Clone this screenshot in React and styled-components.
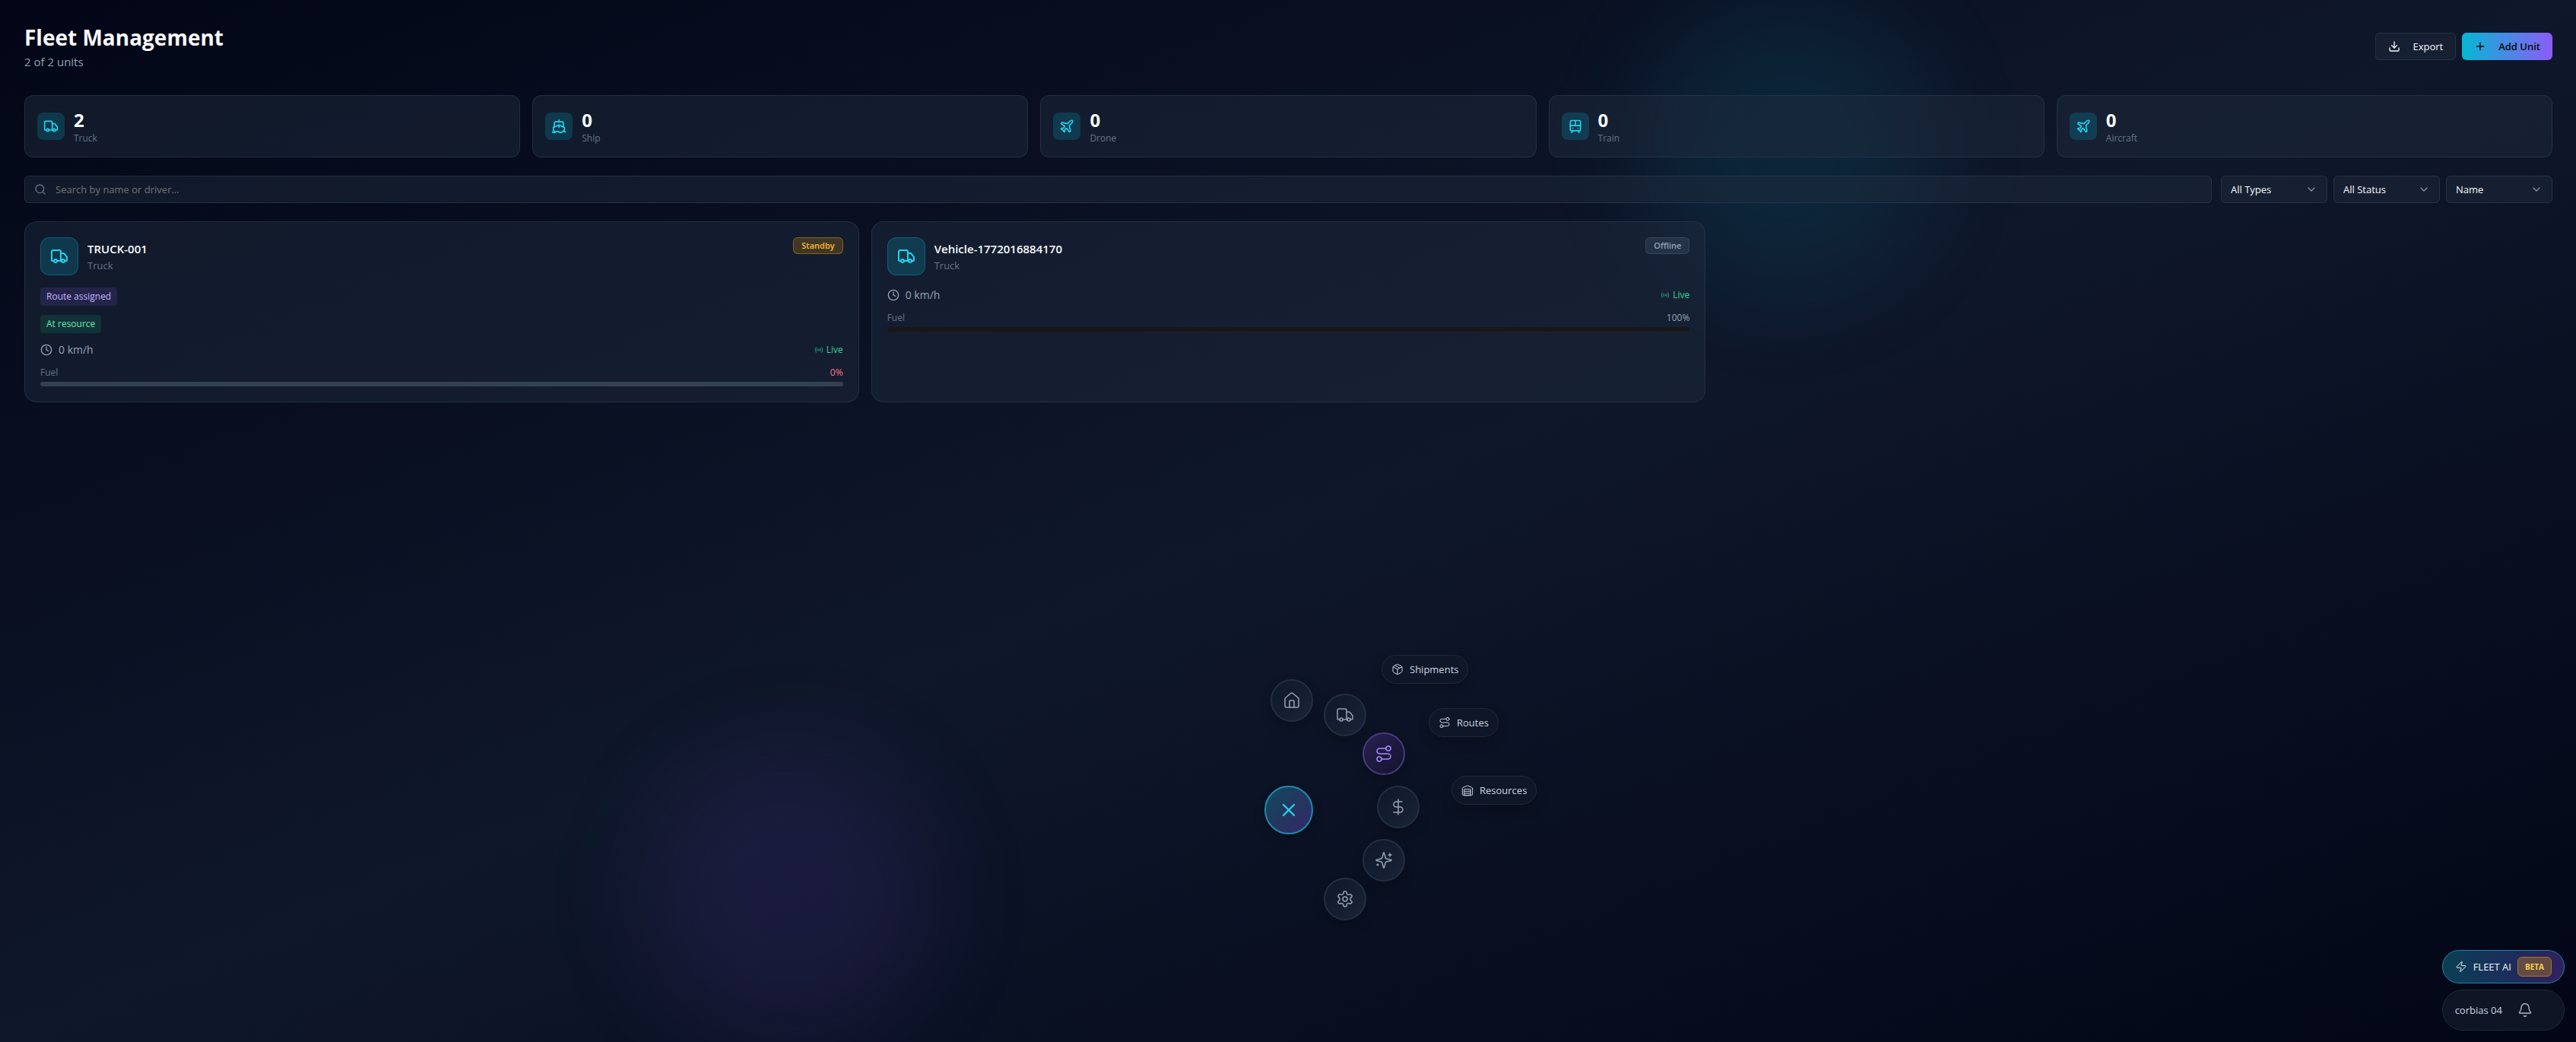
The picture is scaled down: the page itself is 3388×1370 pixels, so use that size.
import React, { useState } from 'react';
import styled, { createGlobalStyle, css } from 'styled-components';
import {
  Truck,
  Ship,
  Plane,
  TramFront,
  Download,
  Plus,
  Search,
  ChevronDown,
  Clock,
  Radio,
  House,
  Route,
  DollarSign,
  X,
  Package,
  Zap,
  Bell,
} from 'lucide-react';

const stats = [
  { label: 'Truck', count: 2, icon: Truck },
  { label: 'Ship', count: 0, icon: Ship },
  { label: 'Drone', count: 0, icon: Plane },
  { label: 'Train', count: 0, icon: TramFront },
  { label: 'Aircraft', count: 0, icon: Plane },
];

const vehicles = [
  {
    name: 'TRUCK-001',
    type: 'Truck',
    status: 'Standby',
    tags: [
      { text: 'Route assigned', tone: 'violet' },
      { text: 'At resource', tone: 'green' },
    ],
    speed: 0,
    fuel: 0,
  },
  {
    name: 'Vehicle-1772016884170',
    type: 'Truck',
    status: 'Offline',
    tags: [],
    speed: 0,
    fuel: 100,
  },
];

// offsets are measured from the top left corner of the radial menu
const menuItems = [
  { label: 'Home', icon: House, x: 8, y: 0 },
  { label: 'Fleet', icon: Truck, x: 78, y: 19 },
  { label: 'Logistics', icon: Route, x: 129, y: 70, active: true },
  { label: 'Finance', icon: DollarSign, x: 148, y: 140 },
  { label: 'Assistant', icon: SparklesIcon, x: 129, y: 210 },
  { label: 'Settings', icon: GearIcon, x: 78, y: 261 },
];

const subItems = [
  { label: 'Shipments', icon: Package, x: 154, y: -32 },
  { label: 'Routes', icon: Route, x: 216, y: 38 },
  { label: 'Resources', icon: WarehouseIcon, x: 246, y: 127 },
];

function App() {
  const [query, setQuery] = useState('');
  const shown = vehicles.filter((v) =>
    v.name.toLowerCase().includes(query.toLowerCase())
  );

  return (
    <>
      <GlobalStyle />
      <PageStyled>
        <Glow $tone='cyan' />
        <Glow $tone='violet' />

        <Content>
          <Header>
            <div>
              <Title>Fleet Management</Title>
              <Subtitle>
                {shown.length} of {vehicles.length} units
              </Subtitle>
            </div>
            <Actions>
              <ActionButton type='button'>
                <Download size={16} />
                Export
              </ActionButton>
              <ActionButton type='button' $primary>
                <Plus size={16} />
                Add Unit
              </ActionButton>
            </Actions>
          </Header>

          <Stats>
            {stats.map(({ label, count, icon: Icon }) => (
              <StatCard key={label}>
                <IconBox>
                  <Icon size={20} />
                </IconBox>
                <div>
                  <StatCount>{count}</StatCount>
                  <StatLabel>{label}</StatLabel>
                </div>
              </StatCard>
            ))}
          </Stats>

          <Filters>
            <SearchBox>
              <Search size={16} />
              <input
                type='text'
                aria-label='Search units'
                placeholder='Search by name or driver...'
                value={query}
                onChange={(e) => setQuery(e.target.value)}
              />
            </SearchBox>
            <Selects>
              <Filter label='Type' options={['All Types', 'Truck', 'Ship']} />
              <Filter label='Status' options={['All Status', 'Standby', 'Offline']} />
              <Filter label='Sort by' options={['Name', 'Fuel', 'Speed']} />
            </Selects>
          </Filters>

          <Cards>
            {shown.map((vehicle) => (
              <VehicleCard key={vehicle.name} vehicle={vehicle} />
            ))}
          </Cards>
        </Content>

        <RadialMenu />

        <Dock>
          <AiButton type='button'>
            <Zap size={16} strokeWidth={1.5} />
            FLEET AI
            <Beta>BETA</Beta>
          </AiButton>
          <UserPill>
            <span>corbias 04</span>
            <BellButton type='button' aria-label='Notifications'>
              <Bell size={20} strokeWidth={2} />
            </BellButton>
          </UserPill>
        </Dock>
      </PageStyled>
    </>
  );
}

function Filter({ label, options }) {
  return (
    <SelectBox>
      <select aria-label={label}>
        {options.map((option) => (
          <option key={option}>{option}</option>
        ))}
      </select>
      <ChevronDown size={16} />
    </SelectBox>
  );
}

function VehicleCard({ vehicle }) {
  const { name, type, status, tags, speed, fuel } = vehicle;

  return (
    <CardStyled>
      <CardHead>
        <IconBox $large>
          <Truck size={24} />
        </IconBox>
        <CardTitle>
          <h3>{name}</h3>
          <p>{type}</p>
        </CardTitle>
        <Status $status={status}>{status}</Status>
      </CardHead>
      {tags.map((tag) => (
        <Tag key={tag.text} $tone={tag.tone}>
          {tag.text}
        </Tag>
      ))}
      <Row>
        <Speed>
          <Clock size={16} />
          {speed} km/h
        </Speed>
        <Live>
          <Radio size={12} />
          Live
        </Live>
      </Row>
      <div>
        <FuelRow $low={fuel < 20}>
          <span>Fuel</span>
          <b>{fuel}%</b>
        </FuelRow>
        <Bar>
          <BarFill style={{ width: `${fuel}%` }} />
        </Bar>
      </div>
    </CardStyled>
  );
}

function RadialMenu() {
  return (
    <MenuStyled>
      {menuItems.map(({ label, icon: Icon, x, y, active }) => (
        <MenuButton
          key={label}
          type='button'
          aria-label={label}
          $x={x}
          $y={y}
          $active={active}
        >
          <Icon size={24} strokeWidth={1.5} />
        </MenuButton>
      ))}
      {subItems.map(({ label, icon: Icon, x, y }) => (
        <SubButton key={label} type='button' $x={x} $y={y}>
          <Icon size={16} strokeWidth={1.5} />
          {label}
        </SubButton>
      ))}
      <CloseButton type='button' aria-label='Close menu'>
        <X size={28} strokeWidth={2} />
      </CloseButton>
    </MenuStyled>
  );
}

function LineIcon({ size, strokeWidth, children }) {
  return (
    <svg
      width={size}
      height={size}
      viewBox='0 0 24 24'
      fill='none'
      stroke='currentColor'
      strokeWidth={strokeWidth}
      strokeLinecap='round'
      strokeLinejoin='round'
    >
      {children}
    </svg>
  );
}

function SparklesIcon(props) {
  return (
    <LineIcon {...props}>
      <path d='M9.937 15.5A2 2 0 0 0 8.5 14.063l-6.135-1.582a.5.5 0 0 1 0-.962L8.5 9.936A2 2 0 0 0 9.937 8.5l1.582-6.135a.5.5 0 0 1 .963 0L14.063 8.5A2 2 0 0 0 15.5 9.937l6.135 1.581a.5.5 0 0 1 0 .964L15.5 14.063a2 2 0 0 0-1.437 1.437l-1.582 6.135a.5.5 0 0 1-.963 0z' />
      <path d='M20 3v4' />
      <path d='M22 5h-4' />
      <path d='M4 17v2' />
      <path d='M5 18H3' />
    </LineIcon>
  );
}

function GearIcon(props) {
  return (
    <LineIcon {...props}>
      <path d='M12.22 2h-.44a2 2 0 0 0-2 2v.18a2 2 0 0 1-1 1.73l-.43.25a2 2 0 0 1-2 0l-.15-.08a2 2 0 0 0-2.73.73l-.22.38a2 2 0 0 0 .73 2.73l.15.1a2 2 0 0 1 1 1.72v.51a2 2 0 0 1-1 1.74l-.15.09a2 2 0 0 0-.73 2.73l.22.38a2 2 0 0 0 2.73.73l.15-.08a2 2 0 0 1 2 0l.43.25a2 2 0 0 1 1 1.73V20a2 2 0 0 0 2 2h.44a2 2 0 0 0 2-2v-.18a2 2 0 0 1 1-1.73l.43-.25a2 2 0 0 1 2 0l.15.08a2 2 0 0 0 2.73-.73l.22-.39a2 2 0 0 0-.73-2.73l-.15-.08a2 2 0 0 1-1-1.74v-.5a2 2 0 0 1 1-1.74l.15-.09a2 2 0 0 0 .73-2.73l-.22-.38a2 2 0 0 0-2.73-.73l-.15.08a2 2 0 0 1-2 0l-.43-.25a2 2 0 0 1-1-1.73V4a2 2 0 0 0-2-2z' />
      <circle cx='12' cy='12' r='3' />
    </LineIcon>
  );
}

function WarehouseIcon(props) {
  return (
    <LineIcon {...props}>
      <path d='M22 8.35V20a2 2 0 0 1-2 2H4a2 2 0 0 1-2-2V8.35A2 2 0 0 1 3.26 6.5l8-3.2a2 2 0 0 1 1.48 0l8 3.2A2 2 0 0 1 22 8.35Z' />
      <path d='M6 18h12' />
      <path d='M6 14h12' />
      <rect x='6' y='10' width='12' height='12' />
    </LineIcon>
  );
}

const GlobalStyle = createGlobalStyle`
  * {
    box-sizing: border-box;
    margin: 0;
    padding: 0;
  }
  body {
    background: #020617;
    color: #f8fafc;
    font-family: 'Segoe UI', 'Open Sans', 'Noto Sans', sans-serif;
    font-size: 14px;
    line-height: 20px;
  }
  button,
  input,
  select {
    font: inherit;
    color: inherit;
    border: none;
    background: none;
    outline: none;
  }
  svg {
    flex-shrink: 0;
  }
`;

const panel = css`
  background: rgba(30, 41, 59, 0.5);
  border: 1px solid rgba(51, 65, 85, 0.5);
`;

const PageStyled = styled.div`
  position: relative;
  min-height: 100vh;
  overflow: hidden;
  background: linear-gradient(to bottom right, #020617, #0f172a, #020617);
`;

const Glow = styled.div`
  position: absolute;
  width: 384px;
  height: 384px;
  border-radius: 50%;
  filter: blur(64px);
  ${({ $tone }) =>
    $tone === 'cyan'
      ? css`
          top: 0;
          right: 25%;
          background: rgba(6, 182, 212, 0.1);
        `
      : css`
          bottom: 0;
          left: 25%;
          background: rgba(139, 92, 246, 0.1);
        `}
`;

const Content = styled.main`
  position: relative;
  display: flex;
  flex-direction: column;
  gap: 24px;
  padding: 29px 31px 29px 32px;
`;

const Header = styled.header`
  display: flex;
  align-items: center;
  justify-content: space-between;
  margin-bottom: 8px;
`;

const Title = styled.h1`
  font-size: 28px;
  font-weight: 700;
  line-height: 40px;
`;

const Subtitle = styled.p`
  color: #94a3b8;
  font-size: 15px;
  line-height: 24px;
`;

const Actions = styled.div`
  display: flex;
  gap: 8px;
`;

const ActionButton = styled.button`
  display: flex;
  align-items: center;
  gap: 16px;
  height: 36px;
  padding: 0 16px;
  border-radius: 6px;
  ${panel}
  font-weight: 500;
  font-size: 13px;
  ${({ $primary }) =>
    $primary &&
    css`
      color: #0a0a0a;
      font-weight: 600;
      border: none;
      background: linear-gradient(to right, #06b6d4, #8b5cf6);
    `}
`;

const Stats = styled.section`
  display: grid;
  grid-template-columns: repeat(5, 1fr);
  gap: 16px;
`;

const StatCard = styled.div`
  ${panel}
  display: flex;
  align-items: center;
  gap: 12px;
  padding: 16px;
  border-radius: 12px;
`;

const IconBox = styled.div`
  display: flex;
  align-items: center;
  justify-content: center;
  width: 36px;
  height: 36px;
  border-radius: 8px;
  color: #22d3ee;
  background: rgba(6, 182, 212, 0.2);
  ${({ $large }) =>
    $large &&
    css`
      width: 50px;
      height: 50px;
      border-radius: 12px;
      border: 1px solid rgba(6, 182, 212, 0.3);
    `}
`;

const StatCount = styled.p`
  font-size: 24px;
  font-weight: 700;
  line-height: 32px;
`;

const StatLabel = styled.p`
  color: #64748b;
  font-size: 12px;
  line-height: 16px;
`;

const Filters = styled.section`
  display: flex;
  gap: 12px;
`;

const SearchBox = styled.label`
  ${panel}
  flex: 1;
  display: flex;
  align-items: center;
  gap: 12px;
  height: 36px;
  padding: 0 12px;
  border-radius: 6px;
  color: #64748b;
  input {
    flex: 1;
    color: #f8fafc;
    font-size: 13px;
    &::placeholder {
      color: #737373;
      opacity: 1;
    }
  }
`;

const Selects = styled.div`
  display: flex;
  gap: 8px;
`;

const SelectBox = styled.div`
  ${panel}
  display: grid;
  align-items: center;
  width: 140px;
  height: 36px;
  border-radius: 6px;
  select,
  svg {
    grid-area: 1 / 1;
  }
  select {
    width: 100%;
    height: 34px;
    padding: 0 12px;
    appearance: none;
    font-size: 13px;
  }
  svg {
    justify-self: end;
    margin-right: 12px;
    color: #fff;
    opacity: 0.5;
    pointer-events: none;
  }
`;

const Cards = styled.section`
  display: grid;
  grid-template-columns: repeat(3, 1fr);
  gap: 16px;
`;

const CardStyled = styled.article`
  ${panel}
  display: flex;
  flex-direction: column;
  gap: 12px;
  padding: 20px;
  border-radius: 16px;
`;

const CardHead = styled.div`
  display: flex;
  align-items: flex-start;
  gap: 12px;
  margin-bottom: 4px;
`;

const CardTitle = styled.div`
  flex: 1;
  align-self: center;
  h3 {
    font-size: 15px;
    font-weight: 600;
    line-height: 24px;
  }
  p {
    color: #64748b;
    font-size: 13px;
  }
`;

const Status = styled.span`
  padding: 2px 10px;
  border-radius: 6px;
  font-size: 11px;
  font-weight: 600;
  line-height: 16px;
  ${({ $status }) =>
    $status === 'Standby'
      ? css`
          color: #fbbf24;
          background: rgba(245, 158, 11, 0.2);
          border: 1px solid rgba(245, 158, 11, 0.4);
        `
      : css`
          color: #94a3b8;
          background: rgba(100, 116, 139, 0.2);
          border: 1px solid rgba(100, 116, 139, 0.3);
        `}
`;

const Tag = styled.span`
  align-self: flex-start;
  padding: 4px 8px;
  border-radius: 4px;
  font-size: 12px;
  line-height: 16px;
  color: ${({ $tone }) => ($tone === 'violet' ? '#c4b5fd' : '#6ee7b7')};
  background: ${({ $tone }) =>
    $tone === 'violet' ? 'rgba(139, 92, 246, 0.15)' : 'rgba(16, 185, 129, 0.15)'};
`;

const Row = styled.div`
  display: flex;
  align-items: center;
  justify-content: space-between;
`;

const Speed = styled.div`
  display: flex;
  align-items: center;
  gap: 8px;
  color: #94a3b8;
`;

const Live = styled.div`
  display: flex;
  align-items: center;
  gap: 4px;
  color: #34d399;
  font-size: 12px;
  line-height: 16px;
  svg {
    opacity: 0.6;
  }
`;

const FuelRow = styled(Row)`
  margin-bottom: 4px;
  color: #64748b;
  font-size: 12px;
  line-height: 16px;
  b {
    font-weight: 400;
    color: ${({ $low }) => ($low ? '#fb7185' : '#94a3b8')};
  }
`;

const Bar = styled.div`
  height: 6px;
  overflow: hidden;
  border-radius: 3px;
  background: #334155;
`;

const BarFill = styled.div`
  height: 100%;
  background: #171717;
`;

const MenuStyled = styled.nav`
  position: absolute;
  left: calc(50% - 31px);
  bottom: 273px;
  width: 64px;
  height: 204px;
`;

const floating = css`
  position: absolute;
  display: flex;
  align-items: center;
  justify-content: center;
  box-shadow: 0 8px 16px rgba(0, 0, 0, 0.2);
`;

const MenuButton = styled.button`
  ${floating}
  left: ${({ $x }) => $x}px;
  top: ${({ $y }) => $y}px;
  width: 56px;
  height: 56px;
  border-radius: 50%;
  color: #94a3b8;
  border: 2px solid #232f41;
  background: linear-gradient(to bottom right, #0f172a, #1a2436);
  ${({ $active }) =>
    $active &&
    css`
      color: #a78bfa;
      border-color: #493b7c;
      background: linear-gradient(to bottom right, #27204f, #14132f);
    `}
`;

const SubButton = styled.button`
  ${floating}
  left: ${({ $x }) => $x}px;
  top: ${({ $y }) => $y}px;
  gap: 8px;
  padding: 8px 12px;
  border-radius: 19px;
  color: #cbd5e1;
  font-size: 13px;
  font-weight: 500;
  border: 1px solid #1e293b;
  background: #0f1628;
`;

const CloseButton = styled.button`
  ${floating}
  left: 0;
  bottom: 0;
  width: 64px;
  height: 64px;
  border-radius: 50%;
  color: #22d3ee;
  border: 2px solid #1c8bab;
  background: linear-gradient(to bottom right, #0f4a5e, #23375f, #35286a);
`;

const Dock = styled.aside`
  position: absolute;
  right: 15px;
  bottom: 15px;
  display: flex;
  flex-direction: column;
  gap: 8px;
`;

const AiButton = styled.button`
  display: flex;
  align-items: center;
  gap: 8px;
  height: 44px;
  padding: 0 16px;
  border-radius: 22px;
  color: #f1f5f9;
  font-size: 13px;
  font-weight: 500;
  border: 1px solid #1d86a0;
  background: linear-gradient(to right, #093f53, #1a2f5c, #30205f);
`;

const Beta = styled.span`
  padding: 4px 9px;
  border-radius: 6px;
  color: #fcd34d;
  font-size: 10px;
  font-weight: 700;
  line-height: 16px;
  border: 1px solid #a9741f;
  background: #634b44;
`;

const UserPill = styled.div`
  display: flex;
  align-items: center;
  gap: 12px;
  padding: 8px 16px;
  border-radius: 27px;
  color: #cbd5e1;
  font-size: 13px;
  border: 1px solid #1e293b;
  background: #0f1525;
`;

const BellButton = styled.button`
  display: flex;
  align-items: center;
  justify-content: center;
  width: 36px;
  height: 36px;
  color: #94a3b8;
`;

export default App;
